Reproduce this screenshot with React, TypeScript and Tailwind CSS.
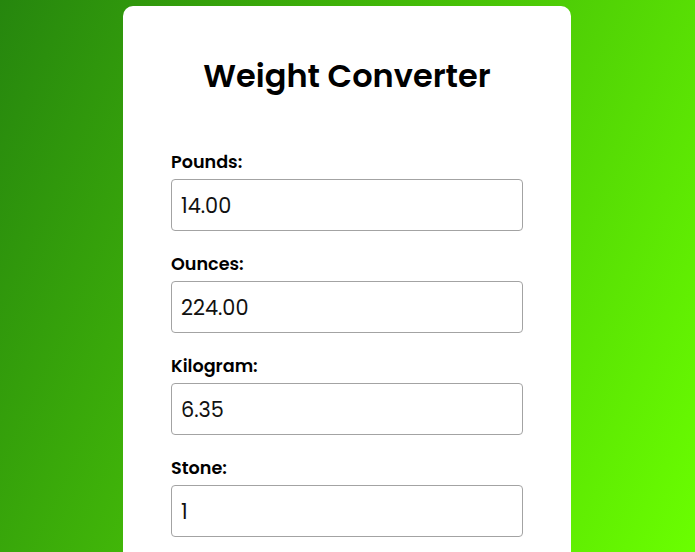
import React from "react";

const fields = [
  { label: "Pounds:", value: "14.00" },
  { label: "Ounces:", value: "224.00" },
  { label: "Kilogram:", value: "6.35" },
  { label: "Stone:", value: "1" },
];

export default function App() {
  return (
    <div
      className="min-h-screen bg-fixed bg-[linear-gradient(115deg,#26860e,#6aff00)] flex justify-center pt-[6px] pr-[1px] pb-[40px]"
      style={{ fontFamily: "Poppins, 'Open Sans', 'Noto Sans', sans-serif" }}
    >
      <div className="w-[448px] bg-white rounded-[10px] px-[48px] pt-[46px] pb-[48px]">
        <h1 className="text-center text-[32px] leading-[48px] font-semibold text-black mb-[50px]">
          Weight Converter
        </h1>
        <div className="flex flex-col gap-[21px]">
          {fields.map((f) => (
            <div key={f.label} className="flex flex-col gap-[5px]">
              <label className="text-[17.6px] leading-[24px] font-semibold text-black">
                {f.label}
              </label>
              <input
                readOnly
                value={f.value}
                className="h-[52px] w-full border border-[#a3a3a3] rounded-[4px] px-[9px] text-[20.8px] text-[#111] outline-none"
              />
            </div>
          ))}
        </div>
      </div>
    </div>
  );
}
